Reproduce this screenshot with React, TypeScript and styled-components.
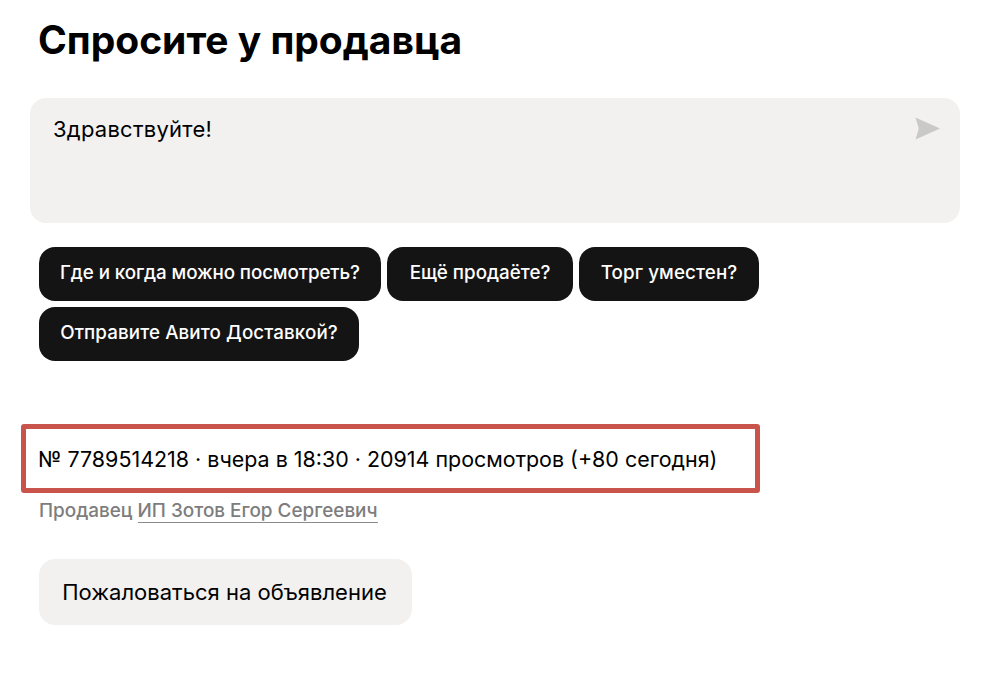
import React from "react";
import styled, { createGlobalStyle } from "styled-components";

const Global = createGlobalStyle`
  html, body { margin: 0; padding: 0; background: #fff; }
  body { font-family: Inter, "Noto Sans", sans-serif; color: #000; }
`;

const Page = styled.div`
  width: 1001px;
  height: 683px;
  box-sizing: border-box;
  overflow: hidden;
  padding: 15px 0 0 39px;
`;

const Title = styled.h2`
  margin: 0 0 33px -1px;
  font: 700 39px/50px Inter, sans-serif;
  letter-spacing: -0.02px;
`;

const Composer = styled.div`
  margin-left: -9px;
  width: 930px;
  height: 125px;
  box-sizing: border-box;
  background: #f2f1f0;
  border-radius: 16px;
  padding: 16px 20px 0 23px;
  display: flex;
  justify-content: space-between;
  align-items: flex-start;
`;

const Message = styled.div`
  font: 400 22px/30px Inter, sans-serif;
  letter-spacing: 0.25px;
`;

const SendIcon = styled.svg`
  width: 25px;
  height: 23px;
  margin-top: 3px;
  fill: #c9c9c7;
`;

const Chips = styled.div`
  margin-top: 24px;
  width: 760px;
  display: flex;
  flex-wrap: wrap;
  gap: 6px;
`;

const Chip = styled.div<{ $width: number; $tracking: number }>`
  width: ${(p) => p.$width}px;
  height: 54px;
  box-sizing: border-box;
  padding-bottom: 2px;
  display: flex;
  align-items: center;
  justify-content: center;
  background: #141414;
  color: #fff;
  border-radius: 16px;
  font: 500 18.8px/24px Inter, sans-serif;
  letter-spacing: ${(p) => p.$tracking}px;
  white-space: nowrap;
`;

const Highlight = styled.div`
  margin: 63px 0 0 -18px;
  width: 739px;
  height: 69px;
  box-sizing: border-box;
  border: 5px solid #c8544c;
  border-radius: 3px;
  padding-left: 12px;
  display: flex;
  align-items: center;
  font: 400 21.45px/28px Inter, sans-serif;
  white-space: nowrap;
`;

const Seller = styled.div`
  margin-top: 6px;
  font: 500 18.9px/24px Inter, sans-serif;
  color: #7d7d7d;
`;

const SellerLink = styled.span`
  border-bottom: 1px solid #8a8a8a;
`;

const Report = styled.div`
  margin-top: 36px;
  width: 373px;
  height: 66px;
  box-sizing: border-box;
  padding-right: 2px;
  display: flex;
  align-items: center;
  justify-content: center;
  background: #f2f1f0;
  border-radius: 16px;
  font: 400 22px/28px Inter, sans-serif;
`;

export default function App() {
  return (
    <Page>
      <Global />
      <Title>Спросите у продавца</Title>
      <Composer>
        <Message>Здравствуйте!</Message>
        <SendIcon viewBox="0 0 25 23">
          <path d="M0.5 0.5 L25 11.5 L0.5 22.5 L3.5 12.5 Q3.8 11.5 3.5 10.5 Z" />
        </SendIcon>
      </Composer>
      <Chips>
        <Chip $width={342} $tracking={-0.1}>Где и когда можно посмотреть?</Chip>
        <Chip $width={186} $tracking={0}>Ещё продаёте?</Chip>
        <Chip $width={180} $tracking={0.1}>Торг уместен?</Chip>
        <Chip $width={320} $tracking={0.1}>Отправите Авито Доставкой?</Chip>
      </Chips>
      <Highlight>№ 7789514218 · вчера в 18:30 · 20914 просмотров (+80 сегодня)</Highlight>
      <Seller>
        Продавец <SellerLink>ИП Зотов Егор Сергеевич</SellerLink>
      </Seller>
      <Report>Пожаловаться на объявление</Report>
    </Page>
  );
}
